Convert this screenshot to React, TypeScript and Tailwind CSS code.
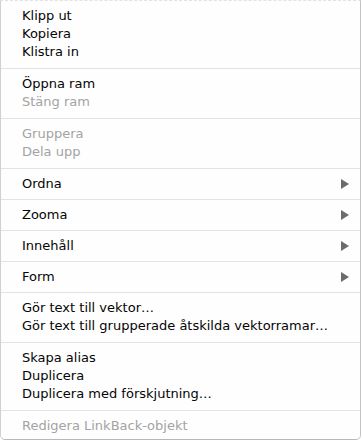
import React from "react";

type Item = {
  label: string;
  disabled?: boolean;
};

const groups: Item[][] = [
  [{ label: "Klipp ut" }, { label: "Kopiera" }, { label: "Klistra in" }],
  [{ label: "Öppna ram" }, { label: "Stäng ram", disabled: true }],
  [
    { label: "Gruppera", disabled: true },
    { label: "Dela upp", disabled: true },
  ],
];

const submenus = ["Ordna", "Zooma", "Innehåll", "Form"];

const lowerGroups: Item[][] = [
  [
    { label: "Gör text till vektor…" },
    { label: "Gör text till grupperade åtskilda vektorramar…" },
  ],
  [
    { label: "Skapa alias" },
    { label: "Duplicera" },
    { label: "Duplicera med förskjutning…" },
  ],
  [{ label: "Redigera LinkBack-objekt", disabled: true }],
];

function Row({ item }: { item: Item }) {
  return (
    <div
      className={`h-[18px] leading-[18px] pl-[21px] whitespace-nowrap ${
        item.disabled ? "text-[#a3a3a3]" : "text-[#050505]"
      }`}
    >
      {item.label}
    </div>
  );
}

function Group({ items }: { items: Item[] }) {
  return (
    <div className="pt-[6px] pb-[7px] border-b border-[#e3e3e3] last:border-b-0">
      {items.map((item) => (
        <Row key={item.label} item={item} />
      ))}
    </div>
  );
}

function SubmenuRow({ label }: { label: string }) {
  return (
    <div className="h-[31px] flex items-center justify-between pl-[21px] pr-[11px] border-b border-[#e3e3e3] text-[#050505]">
      <span>{label}</span>
      <svg width="8" height="10" viewBox="0 0 8 10">
        <path d="M0 0 L8 5 L0 10 Z" fill="#6b6b6b" />
      </svg>
    </div>
  );
}

export default function App() {
  return (
    <div className="w-[362px] h-[441px] bg-white">
      <div
        className="w-[361px] h-[440px] bg-[#fefefe] border border-solid [border-top-style:dashed] border-t-[#e2e2e2] border-l-[#d0d0d0] border-r-[#c4c4c4] border-b-[#b8b8b8] rounded-b-[5px] text-[13px] overflow-hidden"
        style={{ fontFamily: '"DejaVu Sans", "Lucida Grande", sans-serif' }}
      >
        {groups.map((g, i) => (
          <Group key={i} items={g} />
        ))}
        {submenus.map((s) => (
          <SubmenuRow key={s} label={s} />
        ))}
        {lowerGroups.map((g, i) => (
          <Group key={i} items={g} />
        ))}
      </div>
    </div>
  );
}
